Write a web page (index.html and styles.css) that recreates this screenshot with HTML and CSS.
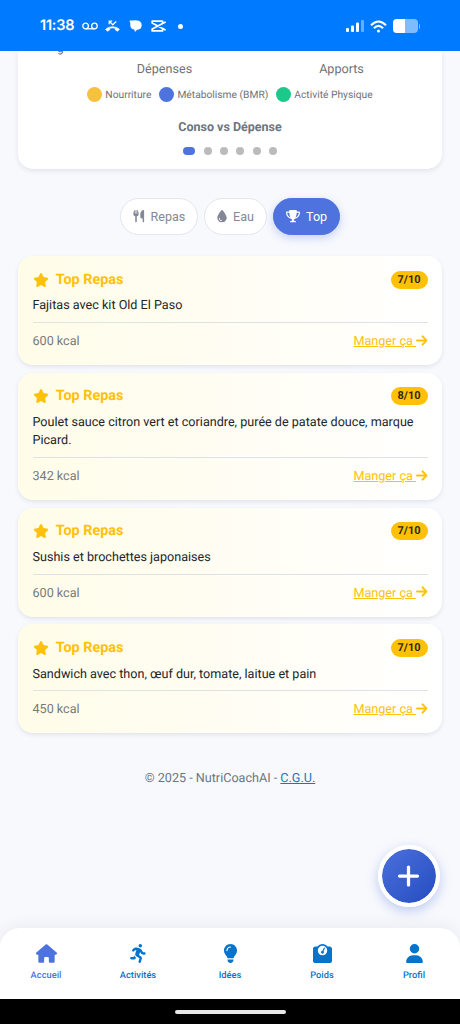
FILE: index.html
```html
<!DOCTYPE html>
<html lang="fr">
<head>
<meta charset="utf-8">
<meta name="viewport" content="width=device-width, initial-scale=1">
<title>NutriCoachAI</title>
<link rel="stylesheet" href="styles.css">
</head>
<body>
<svg class="sprite" aria-hidden="true">
  <symbol id="star" viewBox="0 0 576 512"><path d="M316.9 18C311.6 7 300.4 0 288.1 0s-23.4 7-28.8 18L195 150.3 51.4 171.5c-12 1.8-22 10.2-25.7 21.7s-.7 24.2 7.9 32.7L137.8 329 113.2 474.7c-2 12 3 24.2 12.9 31.3s23 8 33.8 2.3l128.3-68.5 128.3 68.5c10.8 5.7 23.9 4.9 33.8-2.3s14.9-19.3 12.9-31.3L438.5 329 542.7 225.9c8.6-8.5 11.7-21.2 7.9-32.7s-13.7-19.9-25.7-21.7L381.2 150.3 316.9 18z"/></symbol>
  <symbol id="arrow" viewBox="0 0 448 512"><path d="M438.6 278.6c12.5-12.5 12.5-32.8 0-45.3l-160-160c-12.5-12.5-32.8-12.5-45.3 0s-12.5 32.8 0 45.3L338.8 224 32 224c-17.7 0-32 14.3-32 32s14.3 32 32 32l306.7 0L233.4 393.4c-12.5 12.5-12.5 32.8 0 45.3s32.8 12.5 45.3 0l160-160z"/></symbol>
  <symbol id="trophy" viewBox="0 0 576 512"><path d="M400 0L176 0c-26.5 0-48.1 21.8-47.1 48.2c.2 5.3 .4 10.6 .7 15.8L24 64C10.7 64 0 74.7 0 88c0 92.6 33.5 157 78.5 200.7c44.3 43.1 98.3 64.8 138.1 75.8c23.4 6.5 39.4 26 39.4 45.6c0 20.9-17 37.9-37.9 37.9L192 448c-17.7 0-32 14.3-32 32s14.3 32 32 32l192 0c17.7 0 32-14.3 32-32s-14.3-32-32-32l-26.1 0C337 448 320 431 320 410.1c0-19.6 15.9-39.2 39.4-45.6c39.9-11 93.9-32.7 138.2-75.8C542.5 245 576 180.6 576 88c0-13.3-10.7-24-24-24L446.4 64c.3-5.2 .5-10.4 .7-15.8C448.1 21.8 426.5 0 400 0zM48.9 112l84.4 0c9.1 90.1 29.2 150.3 51.9 190.6c-24.9-11-50.8-26.5-73.2-48.3c-32-31.1-58-76-63-142.3zM464.1 254.3c-22.4 21.8-48.3 37.3-73.2 48.3c22.7-40.3 42.8-100.5 51.9-190.6l84.4 0c-5.1 66.3-31.1 111.2-63 142.3z"/></symbol>
  <symbol id="droplet" viewBox="0 0 384 512"><path d="M192 512C86 512 0 426 0 320C0 228.8 130.2 57.7 166.6 11.7C172.6 4.2 181.5 0 191.1 0h1.8c9.6 0 18.5 4.2 24.5 11.7C253.8 57.7 384 228.8 384 320c0 106-86 192-192 192zM96 336c0-8.8-7.2-16-16-16s-16 7.2-16 16c0 61.9 50.1 112 112 112c8.8 0 16-7.2 16-16s-7.2-16-16-16c-44.2 0-80-35.8-80-80z"/></symbol>
  <symbol id="utensils" viewBox="0 0 448 512"><path d="M416 0C400 0 288 32 288 176V288c0 35.3 28.7 64 64 64h32V480c0 17.7 14.3 32 32 32s32-14.3 32-32V352 240 32c0-17.7-14.3-32-32-32zM64 16C64 7.8 57.9 1 49.7 .1S34.2 4.6 32.4 12.5L2.1 148.8C.7 155.1 0 161.5 0 167.9c0 45.9 35.1 83.6 80 87.7V480c0 17.7 14.3 32 32 32s32-14.3 32-32V255.6c44.9-4.1 80-41.8 80-87.7c0-6.4-.7-12.8-2.1-19.1L191.6 12.5c-1.8-8-9.3-13.3-17.4-12.4S160 7.8 160 16V150.2c0 5.4-4.4 9.8-9.8 9.8c-5.1 0-9.3-3.9-9.8-9L127.9 14.6C127.2 6.3 120.3 0 112 0s-15.2 6.3-15.9 14.6L83.7 151c-.5 5.1-4.7 9-9.8 9c-5.4 0-9.8-4.4-9.8-9.8V16z"/></symbol>
  <symbol id="house" viewBox="0 0 576 512"><path d="M575.8 255.5c0 18-15 32.1-32 32.1h-32l.7 160.2c0 2.7-.2 5.4-.5 8.1V472c0 22.1-17.9 40-40 40H456c-1.1 0-2.2 0-3.3-.1c-1.4 .1-2.8 .1-4.2 .1H416 392c-22.1 0-40-17.9-40-40V448 384c0-17.7-14.3-32-32-32H256c-17.7 0-32 14.3-32 32v64 24c0 22.1-17.9 40-40 40H160 128.1c-1.5 0-3-.1-4.5-.2c-1.2 .1-2.4 .2-3.6 .2H104c-22.1 0-40-17.9-40-40V360c0-.9 0-1.9 .1-2.8V287.6H32c-18 0-32-14-32-32.1c0-9 3-17 10-24L266.4 8c7-7 15-8 22-8s15 2 21 7L564.8 231.5c8 7 12 15 11 24z"/></symbol>
  <symbol id="running" viewBox="0 0 448 512"><path d="M320 48A48 48 0 1 0 224 48a48 48 0 1 0 96 0zM125.7 175.5c9.9-9.9 23.4-15.5 37.5-15.5c1.9 0 3.8 .1 5.6 .3L137.6 254c-9.3 28 1.7 58.8 26.8 74.5l86.2 53.9-25.4 88.8c-4.9 17 5 34.7 22 39.6s34.7-5 39.6-22l28.7-100.4c5.9-20.6-2.6-42.6-20.7-53.9L238 299l30.9-82.4 5.1 12.3C289 264.7 323.9 288 362.7 288H384c17.7 0 32-14.3 32-32s-14.3-32-32-32H362.7c-12.9 0-24.6-7.8-29.5-19.7l-6.3-15c-14.6-35.1-44.1-61.9-80.5-73.1l-48.7-15c-11.1-3.4-22.7-5.2-34.4-5.2c-31 0-60.8 12.3-82.7 34.3L57.4 153.4c-12.5 12.5-12.5 32.8 0 45.3s32.8 12.5 45.3 0l23.1-23.1zM91.2 352H32c-17.7 0-32 14.3-32 32s14.3 32 32 32h69.6c19 0 36.2-11.2 43.9-28.5L157 361.6l-9.5-6c-17.5-10.9-30.5-26.8-37.9-44.9L91.2 352z"/></symbol>
  <symbol id="bulb" viewBox="0 0 384 512"><path d="M272 384c9.6-31.9 29.5-59.1 49.2-86.2l0 0c5.2-7.1 10.4-14.2 15.4-21.4c19.8-28.5 31.4-63 31.4-100.3C368 78.8 289.2 0 192 0S16 78.8 16 176c0 37.3 11.6 71.9 31.4 100.3c5 7.2 10.2 14.3 15.4 21.4l0 0c19.8 27.1 39.7 54.4 49.2 86.2H272zM192 512c44.2 0 80-35.8 80-80V416H112v16c0 44.2 35.8 80 80 80zM112 176c0 8.8-7.2 16-16 16s-16-7.2-16-16c0-61.9 50.1-112 112-112c8.8 0 16 7.2 16 16s-7.2 16-16 16c-44.2 0-80 35.8-80 80z"/></symbol>
  <symbol id="scale" viewBox="0 0 512 512"><path fill-rule="evenodd" d="M391.8 64C359.5 24.9 310.7 0 256 0S152.5 24.9 120.2 64H64C28.7 64 0 92.7 0 128V448c0 35.3 28.7 64 64 64H448c35.3 0 64-28.7 64-64V128c0-35.3-28.7-64-64-64H391.8zM128 176a128 128 0 1 1 256 0 128 128 0 1 1 -256 0zM296 224c0-10.6-4.1-20.2-10.9-27.4l33.6-78.3c3.5-8.1-.3-17.5-8.4-21s-17.5 .3-21 8.4L255.7 184c-22 .1-39.7 18-39.7 40c0 22.1 17.9 40 40 40s40-17.9 40-40z"/></symbol>
  <symbol id="user" viewBox="0 0 448 512"><path d="M224 256A128 128 0 1 0 224 0a128 128 0 1 0 0 256zm-45.7 48C79.8 304 0 383.8 0 482.3C0 498.7 13.3 512 29.7 512H418.3c16.4 0 29.7-13.3 29.7-29.7C448 383.8 368.2 304 269.7 304H178.3z"/></symbol>
  <symbol id="plus" viewBox="0 0 448 512"><path d="M256 80c0-17.7-14.3-32-32-32s-32 14.3-32 32V224H48c-17.7 0-32 14.3-32 32s14.3 32 32 32H192V432c0 17.7 14.3 32 32 32s32-14.3 32-32V288H400c17.7 0 32-14.3 32-32s-14.3-32-32-32H256V80z"/></symbol>
</svg>
<div class="screen">
  <header class="status">
    <div class="status-left">
      <span class="clock">11:38</span>
      <svg class="i-voicemail" viewBox="0 0 16 8" fill="none" stroke="#fff" stroke-width="1.3"><circle cx="3.6" cy="4" r="2.8"/><circle cx="12.4" cy="4" r="2.8"/><path d="M3.6 6.8h8.8"/></svg>
      <svg class="i-missed" viewBox="0 0 15 12" fill="none" stroke="#fff"><path d="M4.2 4.3V1.2h3M4.4 1.4l3.4 3.4L11.3 1.4" stroke-width="1.3"/><path d="M.6 9.3C4 5.9 11 5.9 14.4 9.3L12.7 11.3 10.3 10V8.3Q7.5 7.5 4.7 8.3V10L2.3 11.3Z" fill="#fff" stroke-width=".6" stroke-linejoin="round"/></svg>
      <svg class="i-chat" viewBox="0 0 13 12"><path d="M.6 1.3Q0 .4 1.2 .4H4Q6 0 8 .4A4.7 4.7 0 0 1 12.7 5.2 4.5 4.5 0 0 1 8.5 9.7H8L6 11.9 5.3 9.6A4.5 4.5 0 0 1 1.3 5.5V3Z"/></svg>
      <svg class="i-cut" viewBox="0 0 15 12" fill="none" stroke="#fff" stroke-width="1.8" stroke-linejoin="round" stroke-linecap="round"><path d="M14 2.3 1.2 9V10.9H11.5V9.7M14 9.7 1.2 3V1.1H11.5V2.3"/></svg>
      <i class="more-dot"></i>
    </div>
    <div class="status-right">
      <svg class="i-signal" viewBox="0 0 18 12" fill="#fff"><rect y="8" width="3" height="4" rx="1"/><rect x="5" y="5.5" width="3" height="6.5" rx="1"/><rect x="10" y="2.5" width="3" height="9.5" rx="1"/><rect x="15" width="3" height="12" rx="1" opacity=".4"/></svg>
      <svg class="i-wifi" viewBox="0 0 17 13" fill="none" stroke="#fff" stroke-width="2"><path d="M1 5.2Q8.5-2.4 16 5.2M3.9 8.2Q8.5 3.6 13.1 8.2"/><circle cx="8.5" cy="11" r="1.5" fill="#fff" stroke="none"/></svg>
      <div class="battery"><i class="charge"></i></div><i class="battery-tip"></i>
    </div>
  </header>

  <main class="content">
    <section class="chart-card">
      <div class="chart-cut">g</div>
      <div class="axis"><span>Dépenses</span><span>Apports</span></div>
      <div class="legend">
        <span class="key"><i class="swatch food"></i>Nourriture</span>
        <span class="key"><i class="swatch bmr"></i>Métabolisme (BMR)</span>
        <span class="key"><i class="swatch sport"></i>Activité Physique</span>
      </div>
      <h2 class="chart-title">Conso vs Dépense</h2>
      <div class="dots"><i class="on"></i><i></i><i></i><i></i><i></i><i></i></div>
    </section>

    <div class="tabs">
      <button class="tab tab-meal"><svg><use href="#utensils"/></svg>Repas</button>
      <button class="tab tab-water"><svg><use href="#droplet"/></svg>Eau</button>
      <button class="tab tab-top active"><svg><use href="#trophy"/></svg>Top</button>
    </div>

    <section class="meals">
      <article class="meal">
        <div class="meal-head"><svg class="star"><use href="#star"/></svg><h3>Top Repas</h3><span class="score">7/10</span></div>
        <p>Fajitas avec kit Old El Paso</p>
        <div class="meal-foot"><span>600 kcal</span><a href="#">Manger ça <svg><use href="#arrow"/></svg></a></div>
      </article>
      <article class="meal">
        <div class="meal-head"><svg class="star"><use href="#star"/></svg><h3>Top Repas</h3><span class="score">8/10</span></div>
        <p>Poulet sauce citron vert et coriandre, purée de patate douce, marque Picard.</p>
        <div class="meal-foot"><span>342 kcal</span><a href="#">Manger ça <svg><use href="#arrow"/></svg></a></div>
      </article>
      <article class="meal">
        <div class="meal-head"><svg class="star"><use href="#star"/></svg><h3>Top Repas</h3><span class="score">7/10</span></div>
        <p>Sushis et brochettes japonaises</p>
        <div class="meal-foot"><span>600 kcal</span><a href="#">Manger ça <svg><use href="#arrow"/></svg></a></div>
      </article>
      <article class="meal">
        <div class="meal-head"><svg class="star"><use href="#star"/></svg><h3>Top Repas</h3><span class="score">7/10</span></div>
        <p>Sandwich avec thon, œuf dur, tomate, laitue et pain</p>
        <div class="meal-foot"><span>450 kcal</span><a href="#">Manger ça <svg><use href="#arrow"/></svg></a></div>
      </article>
    </section>
    <footer class="legal">© 2025 - NutriCoachAI - <a href="#">C.G.U.</a></footer>
  </main>

  <button class="fab" aria-label="Ajouter"><svg><use href="#plus"/></svg></button>

  <nav class="nav">
    <a class="current" href="#"><svg><use href="#house"/></svg>Accueil</a>
    <a href="#"><svg><use href="#running"/></svg>Activités</a>
    <a href="#"><svg><use href="#bulb"/></svg>Idées</a>
    <a href="#"><svg><use href="#scale"/></svg>Poids</a>
    <a href="#"><svg><use href="#user"/></svg>Profil</a>
  </nav>
  <div class="gesture"><i></i></div>
</div>
</body>
</html>
```

FILE: styles.css
```css
* { box-sizing: border-box; }
body { margin: 0; background: #f8f9fd; font-family: Roboto, "Liberation Sans", sans-serif; text-rendering: geometricPrecision; }
h2, h3, p { margin: 0; }
button { font-family: inherit; }
svg { display: block; fill: currentColor; flex: none; }
i { display: block; flex: none; }
.sprite { display: none; }
.screen { position: relative; display: flex; flex-direction: column; width: 460px; height: 1024px; overflow: hidden; background: #f8f9fd; }

.status { flex: none; display: flex; justify-content: space-between; height: 51px; padding: 1px 40px 0; background: #007aff; color: #fff; }
.status-left, .status-right { display: flex; align-items: center; }
.clock { width: 42px; font: 600 14.5px/20px Inter, sans-serif; letter-spacing: -.2px; }
.i-voicemail { width: 16px; height: 8px; fill: none; }
.i-missed { width: 15px; height: 12px; margin-left: 7px; fill: none; }
.i-chat { width: 13px; height: 12px; margin-left: 9px; }
.i-cut { width: 15px; height: 12px; margin-left: 9px; fill: none; }
.more-dot { width: 5px; height: 5px; margin-left: 12px; border-radius: 50%; background: #fff; }
.i-signal { width: 18px; height: 12px; }
.i-wifi { width: 17px; height: 13px; margin-left: 6px; fill: none; }
.battery { width: 25px; height: 14px; margin-left: 6px; border-radius: 4px; background: #7fbcff; overflow: hidden; }
.charge { width: 12px; height: 14px; background: #fff; }
.battery-tip { width: 1.5px; height: 5px; margin-left: 1px; border-radius: 0 2px 2px 0; background: #7fbcff; }

.content { flex: 1; min-height: 0; padding: 0 18px; overflow: hidden; }
.chart-card { display: flow-root; height: 118px; border-radius: 0 0 15px 15px; background: #fff; box-shadow: 0 2px 5px rgba(40, 50, 80, .1); color: #717276; text-align: center; }
.chart-cut { height: 9px; margin: -3px 0 3.5px; padding-left: 39px; font-size: 12px; line-height: 0; text-align: left; }
.axis { display: grid; grid-template-columns: 177px 177px; justify-content: center; margin-left: 46px; font-size: 12.6px; line-height: 17px; }
.legend { display: flex; justify-content: center; gap: 8px; margin-top: 9.5px; font-size: 10.25px; line-height: 15px; }
.key { display: flex; align-items: center; gap: 3px; }
.swatch { width: 15px; height: 15px; border-radius: 50%; }
.food { background: #f6c23e; }
.bmr { background: #4e73df; }
.sport { background: #1cc88a; }
.chart-title { margin-top: 18px; font-size: 12.5px; font-weight: 700; line-height: 16px; color: #6c757d; }
.dots { display: flex; justify-content: center; gap: 8.4px; margin-top: 11px; }
.dots i { width: 8px; height: 8px; border-radius: 4px; background: #bbb; }
.dots .on { width: 12.5px; background: #4e73df; }

.tabs { display: flex; justify-content: center; gap: 6px; margin-top: 29px; }
.tab { display: flex; align-items: center; height: 37px; padding: 0 12px; border: 1px solid #e3e6f0; border-radius: 19px; background: #fff; color: #858796; font-size: 12.6px; }
.tab svg { height: 12.5px; }
.tab-meal { width: 78px; }
.tab-meal svg { width: 11.5px; margin-right: 6px; }
.tab-water { width: 63px; }
.tab-water svg { width: 10px; margin-right: 6px; }
.tab-top { width: 67px; }
.tab-top svg { width: 14px; margin-right: 6px; }
.tab.active { border-color: #4e73df; background: #4e73df; color: #fff; box-shadow: 0 3px 8px rgba(78, 115, 223, .3); }

.meals { display: flex; flex-direction: column; gap: 7.4px; margin-top: 21px; }
.meal { padding: 14.7px 14.5px 13.1px; border-radius: 15px; background: linear-gradient(90deg, #fffce8, #fff); box-shadow: 0 2px 4px rgba(40, 50, 80, .1); }
.meal-head { display: flex; align-items: center; height: 18px; }
.star { width: 16px; height: 14px; color: #ffc107; }
.meal h3 { margin-left: 7.2px; font-size: 14.4px; line-height: 18px; font-weight: 700; color: #ffc107; }
.score { margin-left: auto; width: 37px; border-radius: 9px; background: #ffc107; color: #33290f; font-size: 11px; font-weight: 700; line-height: 18px; text-align: center; }
.meal p { margin-top: 8.6px; color: #212529; font-size: 12.6px; line-height: 18.6px; }
.meal-foot { display: flex; justify-content: space-between; margin-top: 6.2px; padding-top: 9px; border-top: 1px solid #dee2e6; color: #77797a; font-size: 12.6px; line-height: 20px; }
.meal-foot a { color: #ffc107; text-decoration: underline; }
.meal-foot a svg { display: inline-block; width: 11.5px; height: 13px; vertical-align: -1.5px; stroke: currentColor; stroke-width: 16px; }
.legal { margin-top: 35.5px; color: #6c757d; font-size: 12.6px; line-height: 20px; text-align: center; }
.legal a { color: #0d7dbb; }

.fab { position: absolute; left: 377.5px; top: 845px; display: flex; align-items: center; justify-content: center; width: 62px; height: 62px; padding: 0; border: 4px solid #fff; border-radius: 50%; background: linear-gradient(135deg, #4e73df, #224abe) border-box; background-clip: padding-box; color: #fff; box-shadow: 0 4px 12px rgba(78, 115, 223, .35); }
.fab svg { width: 23px; height: 26px; }
.nav { flex: none; display: grid; grid-template-columns: repeat(5, 1fr); height: 71px; border-radius: 20px 20px 0 0; background: #fff; box-shadow: 0 -4px 14px rgba(50, 50, 90, .06); }
.nav a { display: flex; flex-direction: column; align-items: center; gap: 7px; padding-top: 16px; color: #0674cc; font-size: 9.3px; font-weight: 500; line-height: 12px; text-decoration: none; }
.nav svg { width: 21px; height: 19px; }
.nav .current { color: #4e73df; }
.gesture { flex: none; display: flex; justify-content: center; height: 25px; padding-top: 11px; background: #000; }
.gesture i { width: 111px; height: 3.5px; border-radius: 2px; background: #e8e8e8; }
```
